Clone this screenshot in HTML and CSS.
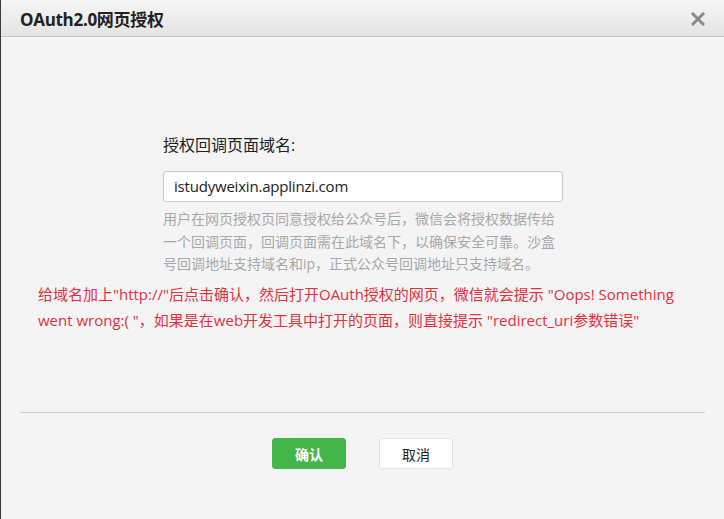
FILE: index.html
```html
<!DOCTYPE html>
<html lang="zh">
<head>
<meta charset="utf-8">
<title>OAuth2.0网页授权</title>
<link rel="stylesheet" href="styles.css">
</head>
<body>
<div class="dialog">
  <div class="dialog-head">
    <h3 class="dialog-title">OAuth2.0网页授权</h3>
    <span class="dialog-close" aria-label="关闭">
      <svg width="14" height="14" viewBox="0 0 14 14"><path d="M2 2L12 12M12 2L2 12" stroke="#8a8a8a" stroke-width="3" stroke-linecap="square"/></svg>
    </span>
  </div>
  <div class="dialog-body">
    <div class="form">
      <label class="form-label">授权回调页面域名:</label>
      <div class="input-box">istudyweixin.applinzi.com</div>
      <p class="form-tips">用户在网页授权页同意授权给公众号后，微信会将授权数据传给一个回调页面，回调页面需在此域名下，以确保安全可靠。沙盒号回调地址支持域名和ip，正式公众号回调地址只支持域名。</p>
    </div>
    <p class="note">给域名加上"http://"后点击确认，然后打开OAuth授权的网页，微信就会提示 "Oops! Something went wrong:( "，如果是在web开发工具中打开的页面，则直接提示 "redirect_uri参数错误"</p>
  </div>
  <div class="dialog-foot">
    <button class="btn btn-primary">确认</button>
    <button class="btn btn-default">取消</button>
  </div>
</div>
</body>
</html>
```
FILE: styles.css
```css
html, body {
  margin: 0;
  padding: 0;
  height: 100%;
}
body {
  background: #f4f4f4;
  font-family: "Open Sans", "Noto Sans CJK SC", sans-serif;
  color: #222;
}
.dialog {
  height: 519px;
  border-left: 1px solid #3a3a3a;
  background: #f4f4f4;
  box-sizing: border-box;
  display: flex;
  flex-direction: column;
}
.dialog-head {
  height: 36px;
  border-bottom: 1px solid #c4c4c4;
  background: linear-gradient(#f6f6f6, #e4e4e4);
  display: flex;
  align-items: center;
  justify-content: space-between;
  padding: 0 19px 0 19px;
}
.dialog-title {
  margin: 0;
  font-size: 17px;
  font-weight: bold;
  color: #222;
  letter-spacing: -0.3px;
}
.dialog-close {
  display: flex;
  margin-top: 2px;
}
.dialog-body {
  padding: 98px 0 0 37px;
}
.form {
  width: 400px;
  margin-left: 125px;
}
.form-label {
  display: block;
  font-size: 16px;
  line-height: 20px;
  color: #222;
}
.input-box {
  margin-top: 16px;
  height: 29px;
  border: 1px solid #c9c9c9;
  border-radius: 3px;
  background: #fff;
  font-size: 15px;
  line-height: 29px;
  padding: 0 10px;
  color: #222;
  letter-spacing: -0.2px;
  box-shadow: inset 0 1px 1px rgba(0,0,0,0.04);
}
.form-tips {
  margin: 6px 0 0 0;
  font-size: 14px;
  line-height: 22.5px;
  color: #a8a8a8;
  width: 396px;
}
.note {
  margin: 5px 0 0 0;
  width: 665px;
  font-size: 15px;
  line-height: 26px;
  color: #e3303d;
}
.dialog-foot {
  margin: auto 19px 0 19px;
  border-top: 1px solid #cfcfcf;
  height: 107px;
  display: flex;
  justify-content: center;
  align-items: flex-start;
  gap: 33px;
  padding-top: 25px;
  box-sizing: border-box;
}
.btn {
  width: 74px;
  height: 31px;
  border-radius: 3px;
  font-family: "Open Sans", "Noto Sans CJK SC", sans-serif;
  font-size: 14px;
  padding: 0;
  cursor: pointer;
}
.btn-primary {
  background: #44b549;
  border: 1px solid #44b549;
  color: #fff;
  font-weight: bold;
}
.btn-default {
  background: #fff;
  border: 1px solid #e4e4e4;
  color: #222;
}
```
